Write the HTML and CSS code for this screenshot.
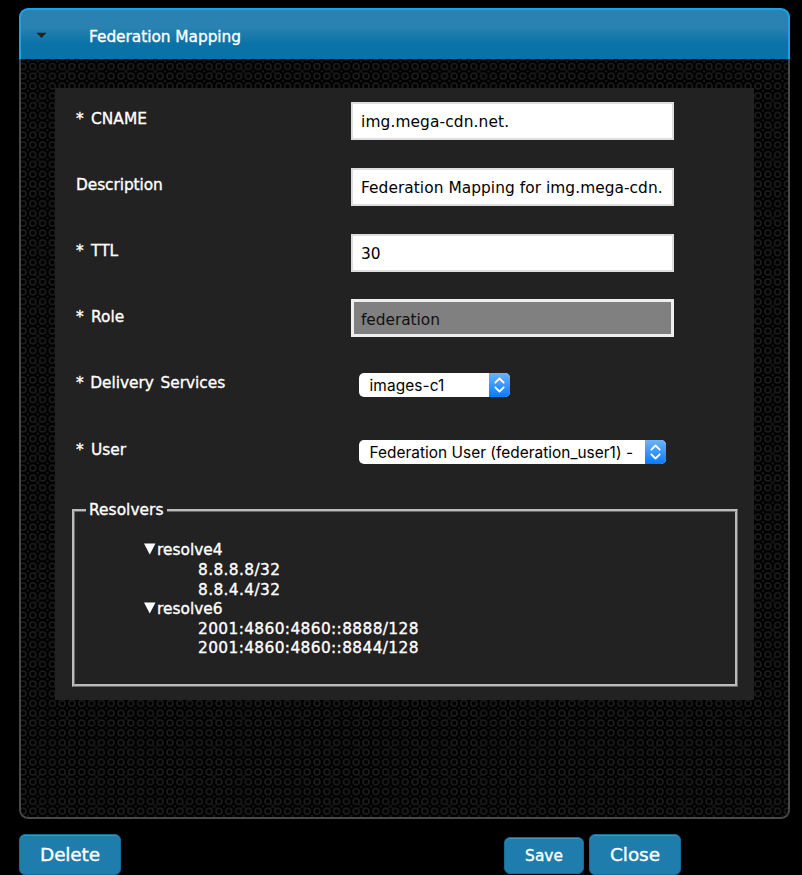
FILE: index.html
```html
<!DOCTYPE html>
<html lang="en">
<head>
<meta charset="utf-8">
<title>Federation Mapping</title>
<link rel="stylesheet" href="styles.css">
</head>
<body>
<section class="panel">
  <header class="panel-head">
    <svg class="caret" viewBox="0 0 12 7"><path d="M0.5 0.5H11.5L6 6.3Z" fill="#222"/></svg>
    <h1>Federation Mapping</h1>
  </header>
  <div class="panel-body">
    <svg class="pattern" aria-hidden="true">
      <defs>
        <pattern id="rings" x="6.9" y="2.5" width="29.4" height="29.4" patternUnits="userSpaceOnUse">
          <g fill="none" stroke="#1f1f1f" stroke-width="1.5">
            <circle cx="4.9" cy="4.9" r="3"/><circle cx="14.7" cy="4.9" r="3"/><circle cx="24.5" cy="4.9" r="3"/>
            <circle cx="4.9" cy="14.7" r="3"/><circle cx="14.7" cy="14.7" r="3"/><circle cx="24.5" cy="14.7" r="3"/>
            <circle cx="4.9" cy="24.5" r="3"/><circle cx="14.7" cy="24.5" r="3"/><circle cx="24.5" cy="24.5" r="3"/>
            <path stroke="#1a1a1a" stroke-width="1.1" d="M7.2 7.2L12.4 12.4M12.4 7.2L7.2 12.4"/>
          </g>
          <g fill="#191919">
            <circle cx="19.6" cy="9.8" r="1.3"/><circle cx="9.8" cy="19.6" r="1.3"/><circle cx="19.6" cy="19.6" r="1.3"/>
            <circle cx="0" cy="0" r="1.3"/><circle cx="29.4" cy="0" r="1.3"/><circle cx="0" cy="29.4" r="1.3"/><circle cx="29.4" cy="29.4" r="1.3"/>
            <circle cx="0" cy="9.8" r="1.3"/><circle cx="29.4" cy="9.8" r="1.3"/><circle cx="0" cy="19.6" r="1.3"/><circle cx="29.4" cy="19.6" r="1.3"/>
            <circle cx="9.8" cy="0" r="1.3"/><circle cx="19.6" cy="0" r="1.3"/><circle cx="9.8" cy="29.4" r="1.3"/><circle cx="19.6" cy="29.4" r="1.3"/>
          </g>
        </pattern>
      </defs>
      <rect width="100%" height="100%" fill="url(#rings)"/>
    </svg>
    <form class="form">
      <div class="row"><label>* CNAME</label><div class="field"><span class="host">img.mega-cdn.net.</span></div></div>
      <div class="row"><label>Description</label><div class="field"><span>Federation Mapping for img.mega-cdn.</span></div></div>
      <div class="row"><label>* TTL</label><div class="field"><span>30</span></div></div>
      <div class="row row-role"><label>* Role</label><div class="field readonly"><span>federation</span></div></div>
      <div class="row row-service"><label>* Delivery Services</label><div class="select select-service"><span>images-c1</span><i><svg viewBox="0 0 21 24"><path d="M6.3 9.7L10.5 5.5L14.7 9.7M6.3 14.3L10.5 18.5L14.7 14.3"/></svg></i></div></div>
      <div class="row row-user"><label>* User</label><div class="select select-user"><span>Federation User (federation_user1) -</span><i><svg viewBox="0 0 21 24"><path d="M6.3 9.7L10.5 5.5L14.7 9.7M6.3 14.3L10.5 18.5L14.7 14.3"/></svg></i></div></div>
      <fieldset>
        <legend>Resolvers</legend>
        <ul class="tree">
          <li><svg viewBox="0 0 12 12"><path d="M0 0.5H11.5L5.75 11.5Z" fill="#fff"/></svg>resolve4
            <ul><li>8.8.8.8/32</li><li>8.8.4.4/32</li></ul></li>
          <li><svg viewBox="0 0 12 12"><path d="M0 0.5H11.5L5.75 11.5Z" fill="#fff"/></svg>resolve6
            <ul><li>2001:4860:4860::8888/128</li><li>2001:4860:4860::8844/128</li></ul></li>
        </ul>
      </fieldset>
    </form>
  </div>
</section>
<footer class="actions">
  <button class="delete">Delete</button>
  <button class="save">Save</button>
  <button class="close">Close</button>
</footer>
</body>
</html>
```
FILE: styles.css
```css
* { box-sizing: border-box; }
html, body { height: 875px; overflow: hidden; }
body {
  margin: 0;
  padding: 8px 12px 0 19px;
  background: #000;
  color: #fff;
  font: 15.4px/19.6px "DejaVu Sans", Verdana, sans-serif;
  -webkit-text-stroke: 0.35px currentColor;
}
.panel { display: flex; flex-direction: column; width: 771px; height: 811px; }
.panel-head {
  display: flex;
  align-items: center;
  height: 51px;
  padding: 6px 0 0 15px;
  border: 2px solid #1ba3e6;
  border-bottom: 0;
  border-radius: 9px 9px 0 0;
  background: linear-gradient(#2982b1 0 35%, #0972a7 70%);
}
.caret { width: 11px; height: 7px; margin-bottom: 4px; }
h1 { margin: 0 0 0 42px; font-size: 15.4px; font-weight: 400; letter-spacing: -0.05px; }
.panel-body {
  position: relative;
  flex: 1;
  padding: 29px 34px;
  border: 2px solid #484848;
  border-top: 0;
  border-radius: 0 0 9px 9px;
  overflow: hidden;
}
.pattern { position: absolute; inset: 0; width: 100%; height: 100%; }
.form {
  position: relative;
  width: 699px;
  height: 612px;
  padding: 14px 17px 0;
  background: #222;
}
.row { display: flex; height: 65.8px; padding-left: 4px; }
.row label { width: 275px; padding-top: 8px; word-spacing: 2.5px; }
.row:nth-child(2) label { letter-spacing: -0.08px; }
.row-role label, .row-service label, .row-user label { padding-top: 9px; }
.row-service label { word-spacing: 1.8px; letter-spacing: -0.04px; }
.field {
  width: 323px;
  height: 38px;
  padding: 9px 8px;
  border: 2px solid #ddd;
  background: #fff;
  color: #000;
  white-space: nowrap;
  overflow: hidden;
  letter-spacing: 0.05px;
  -webkit-text-stroke: 0;
}
.host { letter-spacing: 0.12px; }
.readonly { border: 3px solid #eee; padding: 9px 7px 6px; background: #808080; color: #111; letter-spacing: -0.05px; }
.select {
  display: flex;
  height: 24px;
  margin: 8px 0 0 8px;
  border-radius: 5px;
  background: #fff;
  color: #000;
  overflow: hidden;
  font: 15.4px/25px Inter, sans-serif;
  letter-spacing: 0.03px;
  -webkit-text-stroke: 0;
}
.select span { flex: 1; padding-left: 10.5px; white-space: nowrap; }
.select-service span { letter-spacing: 0.1px; }
.select i { width: 21px; background: linear-gradient(#6cb3fa, #0a7aff); }
.select svg { display: block; width: 21px; height: 24px; fill: none; stroke: #fff; stroke-width: 1.8; stroke-linecap: round; stroke-linejoin: round; }
.select-service { width: 151px; }
.select-user { width: 307px; }
.row-user { padding-top: 1.5px; }
fieldset {
  width: 666px;
  height: 186px;
  margin: 4px 0 0;
  padding: 21px 0 0 69px;
  border: 3px ridge #bbb;
}
legend { margin-left: -58px; padding: 0 3px; letter-spacing: 0.05px; }
.tree, .tree ul { margin: 0; padding: 0; list-style: none; }
.tree svg { width: 12px; height: 12px; margin-right: 1px; vertical-align: 0; }
.tree ul { padding-left: 54px; letter-spacing: 0.37px; }
.actions { display: flex; align-items: center; height: 41px; margin-top: 15px; }
button {
  padding: 0;
  border: 1px solid #176c98;
  border-radius: 6px;
  background: #1e7dad;
  box-shadow: inset 0 1px #3e93c0;
  color: #fff;
  font: 18.5px "DejaVu Sans", Verdana, sans-serif;
  -webkit-text-stroke: 0.35px currentColor;
}
.delete { width: 102px; height: 41px; letter-spacing: -0.15px; }
.save { width: 80px; height: 37px; margin: 2px 5px 0 383px; font-size: 15.4px; }
.close { width: 92px; height: 41px; letter-spacing: -0.1px; }
```
